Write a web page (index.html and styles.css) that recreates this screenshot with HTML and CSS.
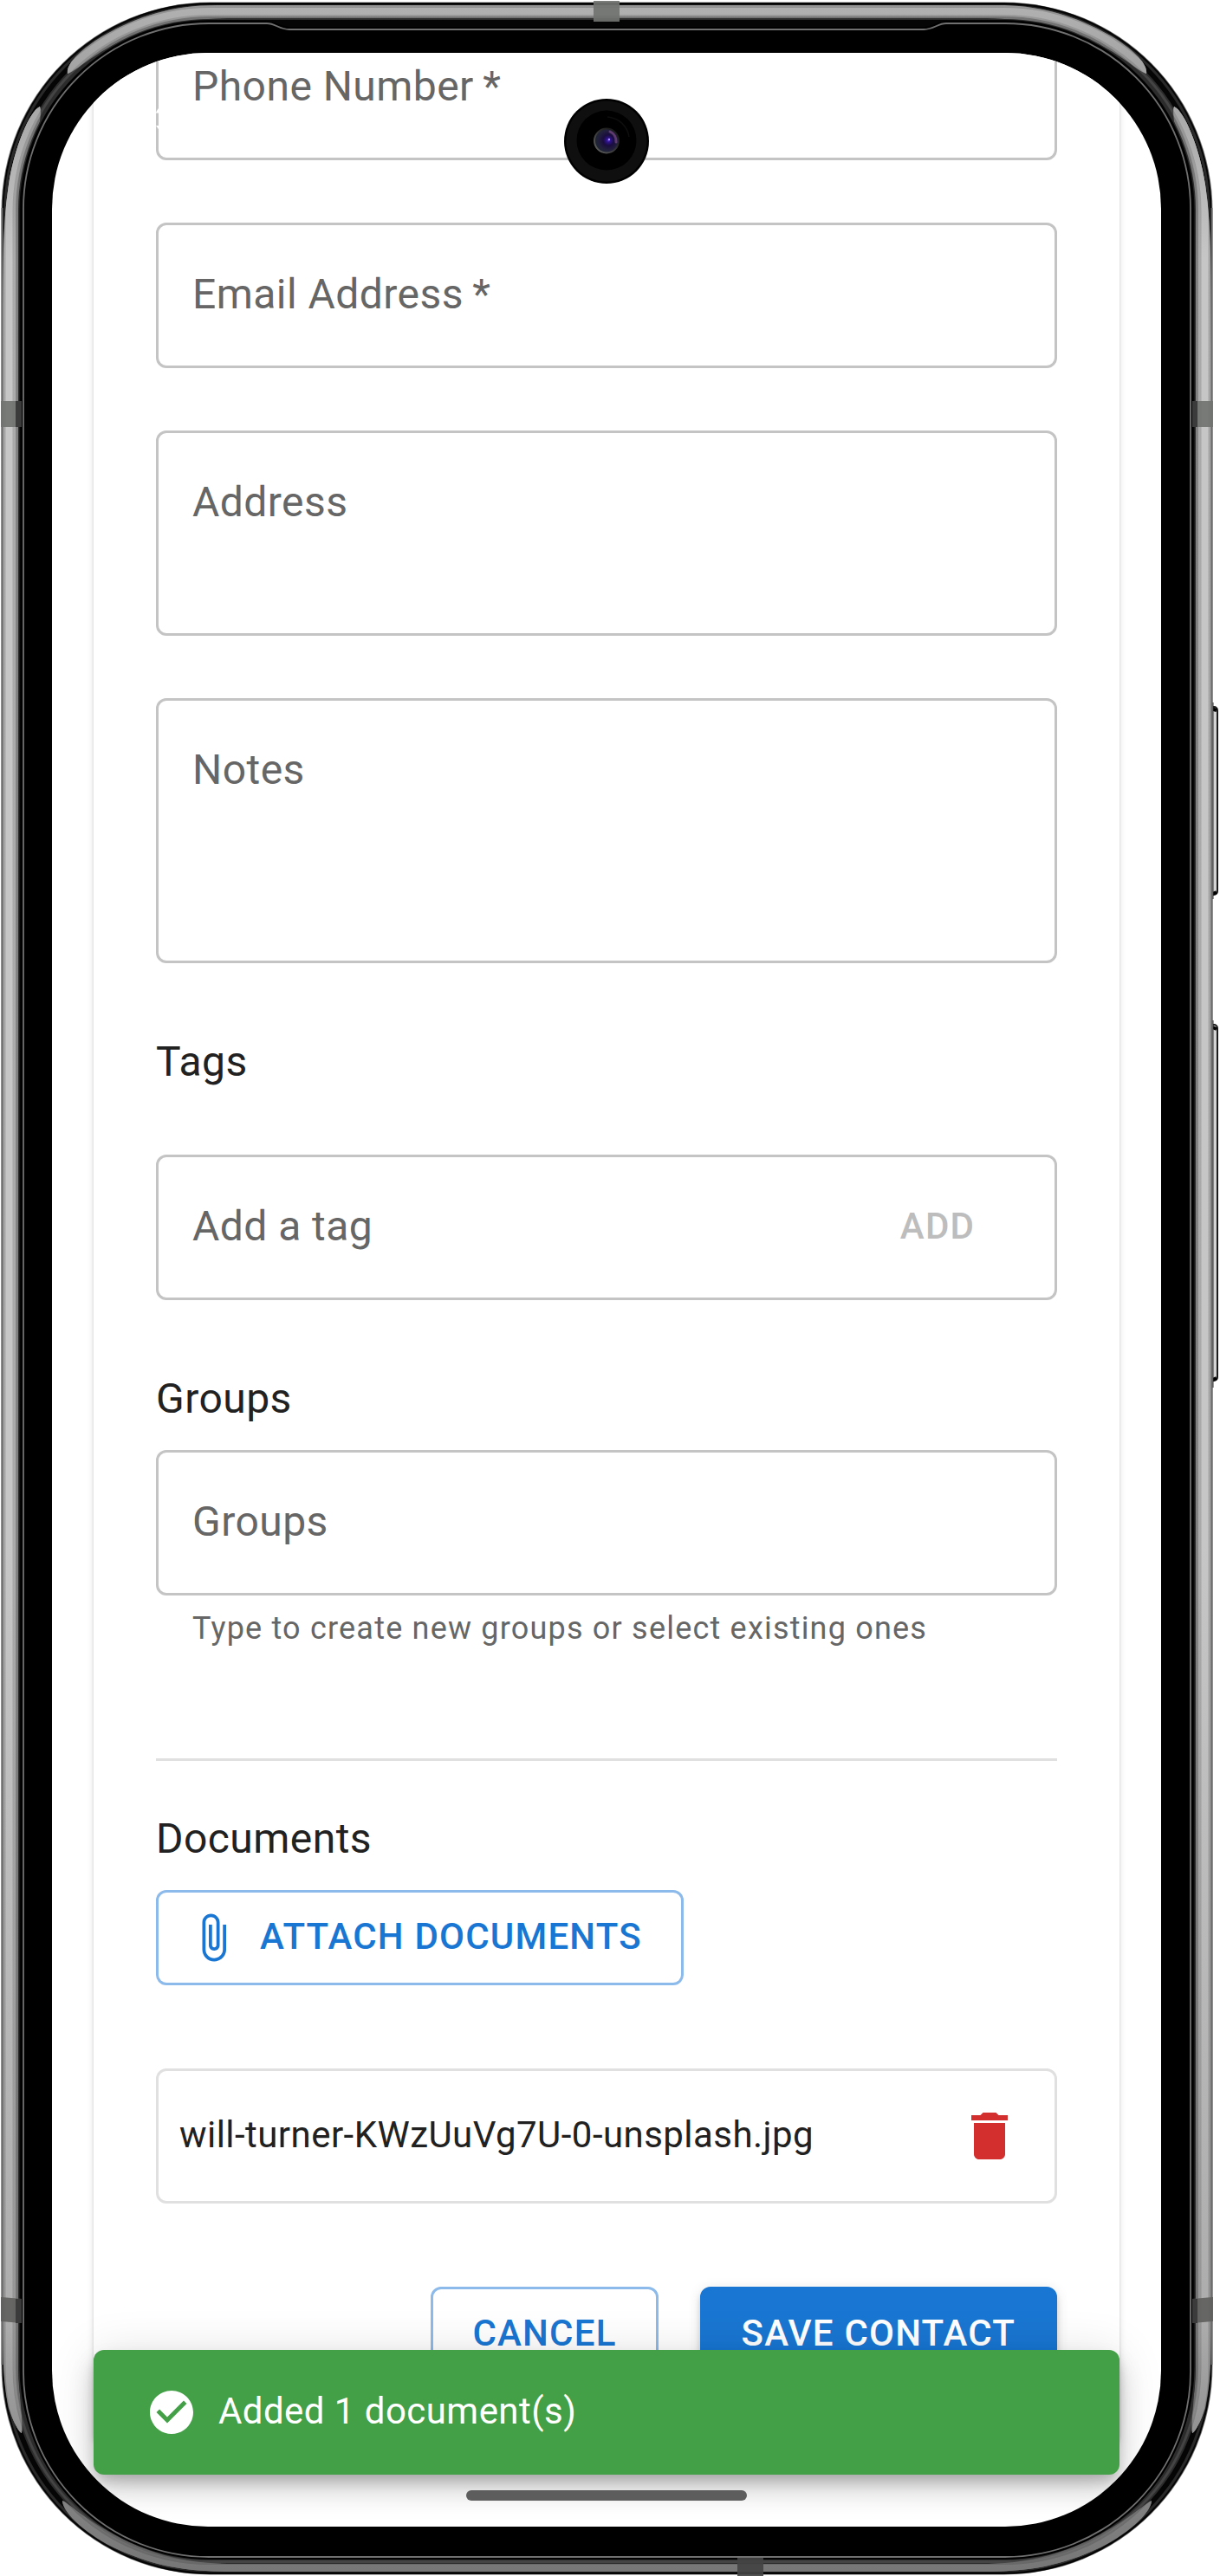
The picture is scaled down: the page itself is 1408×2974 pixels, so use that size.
FILE: index.html
```html
<!DOCTYPE html>
<html lang="en">
<head>
<meta charset="utf-8">
<title>Add Contact</title>
<link rel="stylesheet" href="styles.css">
</head>
<body>
<div class="device">
  <svg class="frame" width="1408" height="2974" viewBox="0 0 1408 2974" aria-hidden="true">
    <defs>
      <linearGradient id="metal" gradientUnits="userSpaceOnUse" x1="0" y1="0" x2="0" y2="2974">
        <stop offset="0" stop-color="#b2b2b2"/><stop offset=".03" stop-color="#a2a2a2"/><stop offset=".1" stop-color="#c6c6c6"/>
        <stop offset=".6" stop-color="#c6c6c6"/><stop offset=".9" stop-color="#adadad"/><stop offset=".97" stop-color="#828282"/><stop offset="1" stop-color="#767676"/>
      </linearGradient>
      <clipPath id="shine">
        <path id="side" d="M46 123C34 128 16 172 10 213C5 250 3 270 3 400V2650C3 2720 3 2745 10 2780C16 2798 22 2808 25 2809C27 2795 21 2760 21 2720V400C21 290 25 240 32 205C38 175 50 137 46 123Z"/>
        <use href="#side" transform="matrix(-1 0 0 1 1401 0)"/>
        <path d="M78 85C76 73 95 56 118 42C160 18 200 6 250 6H1151C1201 6 1241 18 1283 42C1306 56 1325 73 1323 85C1310 80 1296 64 1262 48C1215 28 1180 21 1130 21H271C221 21 186 28 139 48C105 64 91 80 78 85Z"/>
        <path d="M72 2887C80 2890 95 2908 140 2930C180 2950 215 2960 270 2960H1131C1186 2960 1221 2950 1261 2930C1306 2908 1321 2890 1329 2887C1329 2898 1308 2922 1270 2941C1225 2962 1190 2969 1130 2969H271C211 2969 176 2962 131 2941C93 2922 72 2898 72 2887Z"/>
      </clipPath>
      <radialGradient id="lens" cx=".58" cy=".48" r=".55">
        <stop offset="0" stop-color="#5a32d8"/><stop offset=".15" stop-color="#2d1289"/><stop offset=".4" stop-color="#1a0d3f"/><stop offset=".75" stop-color="#22203c"/><stop offset="1" stop-color="#1d2733"/>
      </radialGradient>
      <linearGradient id="rim" x1="0" y1="1" x2="1" y2="0">
        <stop offset="0" stop-color="#666"/><stop offset=".6" stop-color="#2b2b2b"/><stop offset="1" stop-color="#111"/>
      </linearGradient>
      <linearGradient id="key" x1="0" y1="0" x2="1" y2="0">
        <stop offset="0" stop-color="#555"/><stop offset=".4" stop-color="#d4d4d4"/><stop offset="1" stop-color="#d4d4d4"/>
      </linearGradient>
    </defs>
    <g fill="url(#key)" stroke="#1c1c1c" stroke-width="2">
      <rect x="1396" y="816" width="9" height="217" rx="4"/>
      <rect x="1396" y="1183" width="9" height="411" rx="4"/>
    </g>
    <path d="M1399 818.500L1404 820M1399 1032L1404 1030M1399 1186L1404 1188M1399 1593L1404 1591" stroke="#000" stroke-width="4"/>
    <path d="M1399 811V1038M1399 1178V1602" stroke="#333" stroke-width="3"/>
    <rect x="1.500" y="2.500" width="1398" height="2970" rx="241" fill="#777"/>
    <rect x="2.500" y="3" width="1396" height="2969" rx="240" fill="#050505"/>
    <g fill="none">
      <rect x="6" y="7" width="1389" height="2961" rx="236" stroke="#292929" stroke-width="3"/>
      <rect x="18" y="18.500" width="1365" height="2938" rx="224" stroke="#2c2c2c" stroke-width="9"/>
      <rect x="17" y="17.500" width="1367" height="2940" rx="225" stroke="#444" stroke-width="3"/>
      <path d="M2.500 240V2730M1398.500 240V2730" stroke="#6b6b6b" stroke-width="2"/>
    </g>
    <g clip-path="url(#shine)" fill="none" stroke="url(#metal)">
      <rect x="11.500" y="12.500" width="1378" height="2952" rx="230" stroke-width="19" stroke-opacity=".55"/>
      <rect x="11" y="12" width="1379" height="2953" rx="231" stroke-width="14" stroke-opacity=".55"/>
      <rect x="10.500" y="13" width="1380" height="2952" rx="231" stroke-width="8"/>
    </g>
    <path d="M27 241A214 214 0 0 1 241 27H308C318 27 322 34 334 34H1066C1078 34 1082 27 1092 27H1160A214 214 0 0 1 1374 241V2738A214 214 0 0 1 1160 2952H241A214 214 0 0 1 27 2738Z" fill="#000" stroke="#000" stroke-width="6"/>
    <path d="M27 241A214 214 0 0 1 241 27H308C318 27 322 34 334 34H1066C1078 34 1082 27 1092 27H1160A214 214 0 0 1 1374 241V2738A214 214 0 0 1 1160 2952H241A214 214 0 0 1 27 2738Z" fill="none" stroke="#707070" stroke-width="1.800"/>
    <g fill="#70736f" fill-opacity=".92">
      <path d="M1 463H25V493H1ZM1376 463H1400V493H1376Z"/>
      <path d="M685 1H715V25H685Z"/>
      <path d="M1 2652L25 2654V2682L1 2680ZM1400 2652L1376 2654V2682L1400 2680Z" fill="#5f615e"/>
      <path d="M851 2953H881V2974H851Z" fill="#424342"/>
    </g>
    <path d="M18 463H25V493H18ZM1376 463H1382V493H1376ZM18 2654H25V2682H18ZM1376 2654H1382V2682H1376Z" fill="#3a3b3a"/>
  </svg>

  <main class="screen">
    <form class="card">
      <div class="field"><label>Phone Number<span class="required">&nbsp;*</span></label></div>
      <div class="field"><label>Email Address<span class="required">&nbsp;*</span></label></div>
      <div class="field field-address"><label>Address</label></div>
      <div class="field field-notes"><label>Notes</label></div>

      <h2 class="heading heading-tags">Tags</h2>
      <div class="field field-tag"><label>Add a tag</label><span class="add">ADD</span></div>

      <h2 class="heading heading-groups">Groups</h2>
      <div class="field field-groups"><label>Groups</label></div>
      <p class="helper">Type to create new groups or select existing ones</p>

      <hr class="divider">
      <h2 class="heading heading-docs">Documents</h2>
      <button type="button" class="btn btn-outlined">
        <svg class="clip" viewBox="0 0 24 24" fill="currentColor"><path d="M16.500 6v11.500c0 2.210-1.790 4-4 4s-4-1.790-4-4V5c0-1.380 1.120-2.500 2.500-2.500s2.500 1.120 2.500 2.500v10.500c0 .55-.45 1-1 1s-1-.45-1-1V6H10v9.500c0 1.380 1.120 2.500 2.500 2.500s2.500-1.120 2.500-2.500V5c0-2.210-1.790-4-4-4S7 2.790 7 5v12.500c0 3.040 2.460 5.500 5.500 5.500s5.500-2.460 5.500-5.500V6h-1.500z"/></svg>
        <span>ATTACH DOCUMENTS</span>
      </button>

      <div class="file">
        <span>will-turner-KWzUuVg7U-0-unsplash.jpg</span>
        <svg class="trash" viewBox="0 0 24 24" fill="#d32f2f"><path d="M6 19c0 1.100.9 2 2 2h8c1.100 0 2-.9 2-2V7H6v12zM19 4h-3.500l-1-1h-5l-1 1H5v2h14V4z"/></svg>
      </div>

      <div class="actions">
        <button type="button" class="btn btn-outlined"><span>CANCEL</span></button>
        <button type="button" class="btn btn-contained"><span>SAVE CONTACT</span></button>
      </div>
    </form>

    <svg class="status" width="12" height="40" viewBox="0 0 12 40" fill="#fff" aria-hidden="true"><path d="M3 14Q0 18 0 19.500H6V13ZM0 34Q2 38 6 40V34Z"/></svg>
    <div class="camera">
      <svg width="98" height="98" viewBox="0 0 98 98" aria-hidden="true">
        <circle cx="49" cy="49" r="49" fill="#000"/><circle cx="49" cy="49" r="46.500" fill="#0f0f0f"/><circle cx="49" cy="48" r="34.500" fill="#000"/>
        <path d="M50 21A27 27 0 0 1 75 44" fill="none" stroke="#0e0e0e" stroke-width="1.500"/>
        <circle cx="49" cy="48.500" r="14" fill="url(#lens)" stroke="url(#rim)" stroke-width="2"/>
        <path d="M53 38A12 12 0 0 1 60 50" fill="none" stroke="#7b4a86" stroke-width="3" stroke-linecap="round" opacity=".7"/>
        <circle cx="52" cy="47" r="1.200" fill="#a98cff"/>
      </svg>
    </div>
    <div class="toast">
      <svg class="check" viewBox="0 0 24 24" fill="#fff"><path d="M12 2C6.500 2 2 6.500 2 12S6.500 22 12 22 22 17.500 22 12 17.500 2 12 2M10 17L5 12L6.410 10.590L10 14.170L17.590 6.580L19 8L10 17Z"/></svg>
      <span>Added 1 document(s)</span>
    </div>
    <div class="home-bar"></div>
  </main>
</div>
</body>
</html>
```
FILE: styles.css
```css
* { box-sizing: border-box; }

body {
  margin: 0;
  background: #fff;
  font-family: Roboto, "Liberation Sans", sans-serif;
  color: #212121;
}

.device {
  position: relative;
  width: 1408px;
  height: 2974px;
  padding: 61px 68px 57px 60px;
  overflow: hidden;
}

.frame { position: absolute; inset: 0; }

.screen {
  position: relative;
  display: flow-root;
  height: 2856px;
  border-radius: 180px;
  overflow: hidden;
  background: #fff;
}

.card {
  display: flex;
  flex-direction: column;
  align-items: stretch;
  margin: -116px 48px 0;
  padding: 72px 72px 72px;
  border-radius: 12px;
  background: #fff;
  box-shadow: 0 6px 3px -3px rgba(0,0,0,.2), 0 3px 3px 0 rgba(0,0,0,.14), 0 3px 9px 0 rgba(0,0,0,.12);
}

.field {
  display: flex;
  justify-content: space-between;
  align-items: flex-start;
  height: 168px;
  margin-bottom: 72px;
  padding: 45px 39px 0;
  border: 3px solid #c4c4c4;
  border-radius: 12px;
  color: #666;
  font-size: 48px;
  line-height: 69px;
  letter-spacing: .45px;
}
.field-address { height: 237px; }
.field-notes { height: 306px; margin-bottom: 78px; }
.field-tag { margin-bottom: 78px; }
.field-groups { margin-bottom: 0; }

.required { margin-left: -2px; }

.add {
  width: 192px;
  color: #bdbdbd;
  font-size: 42px;
  font-weight: 500;
  letter-spacing: 1.2px;
  text-align: center;
}

.heading {
  margin: 0 0 23px;
  font-size: 48px;
  font-weight: 400;
  line-height: 72px;
  letter-spacing: .45px;
}
.heading-tags { margin-bottom: 71px; }

.helper {
  margin: 8px 42px 0;
  color: #666;
  font-size: 36px;
  line-height: 60px;
  letter-spacing: 1.2px;
}

.divider {
  width: 100%;
  height: 3px;
  margin: 120px 0 54px;
  border: 0;
  background: #e0e0e0;
}

.btn {
  display: inline-flex;
  align-items: center;
  align-self: flex-start;
  height: 110px;
  padding: 0 45px;
  border: 3px solid #8cbaea;
  border-radius: 12px;
  background: transparent;
  color: #1976d2;
  font: 500 42px/74px Roboto, "Liberation Sans", sans-serif;
  letter-spacing: 1.2px;
  white-space: nowrap;
}
.btn span,
.file span,
.toast span { padding-bottom: 2px; }

.btn-contained {
  border-color: #1976d2;
  background: #1976d2;
  color: #fff;
  box-shadow: 0 9px 3px -6px rgba(0,0,0,.2), 0 6px 6px 0 rgba(0,0,0,.14), 0 3px 15px 0 rgba(0,0,0,.12);
}

.clip { width: 60px; height: 60px; margin: 0 24px 0 -12px; }

.file {
  display: flex;
  align-items: center;
  justify-content: space-between;
  height: 156px;
  margin: 96px 0;
  padding: 0 39px 0 24px;
  border: 3px solid #e0e0e0;
  border-radius: 12px;
  font-size: 42px;
  line-height: 60px;
  letter-spacing: .45px;
}
.trash { width: 72px; height: 72px; }

.actions { display: flex; justify-content: flex-end; gap: 48px; }

.status { position: absolute; left: 120px; top: 50px; }

.camera { position: absolute; left: 591px; top: 53px; width: 98px; height: 98px; }

.toast {
  position: absolute;
  left: 48px;
  right: 48px;
  top: 2652px;
  display: flex;
  align-items: center;
  gap: 24px;
  height: 144px;
  padding: 0 60px;
  border-radius: 12px;
  background: #43a047;
  color: #fff;
  font-size: 42px;
  line-height: 60px;
  letter-spacing: .45px;
  box-shadow: 0 9px 15px -3px rgba(0,0,0,.2), 0 18px 30px 0 rgba(0,0,0,.14), 0 3px 54px 0 rgba(0,0,0,.12);
}
.check { width: 60px; height: 60px; }

.home-bar {
  position: absolute;
  left: 478px;
  top: 2814px;
  width: 324px;
  height: 12px;
  border-radius: 6px;
  background: #5d5d5d;
}
```
